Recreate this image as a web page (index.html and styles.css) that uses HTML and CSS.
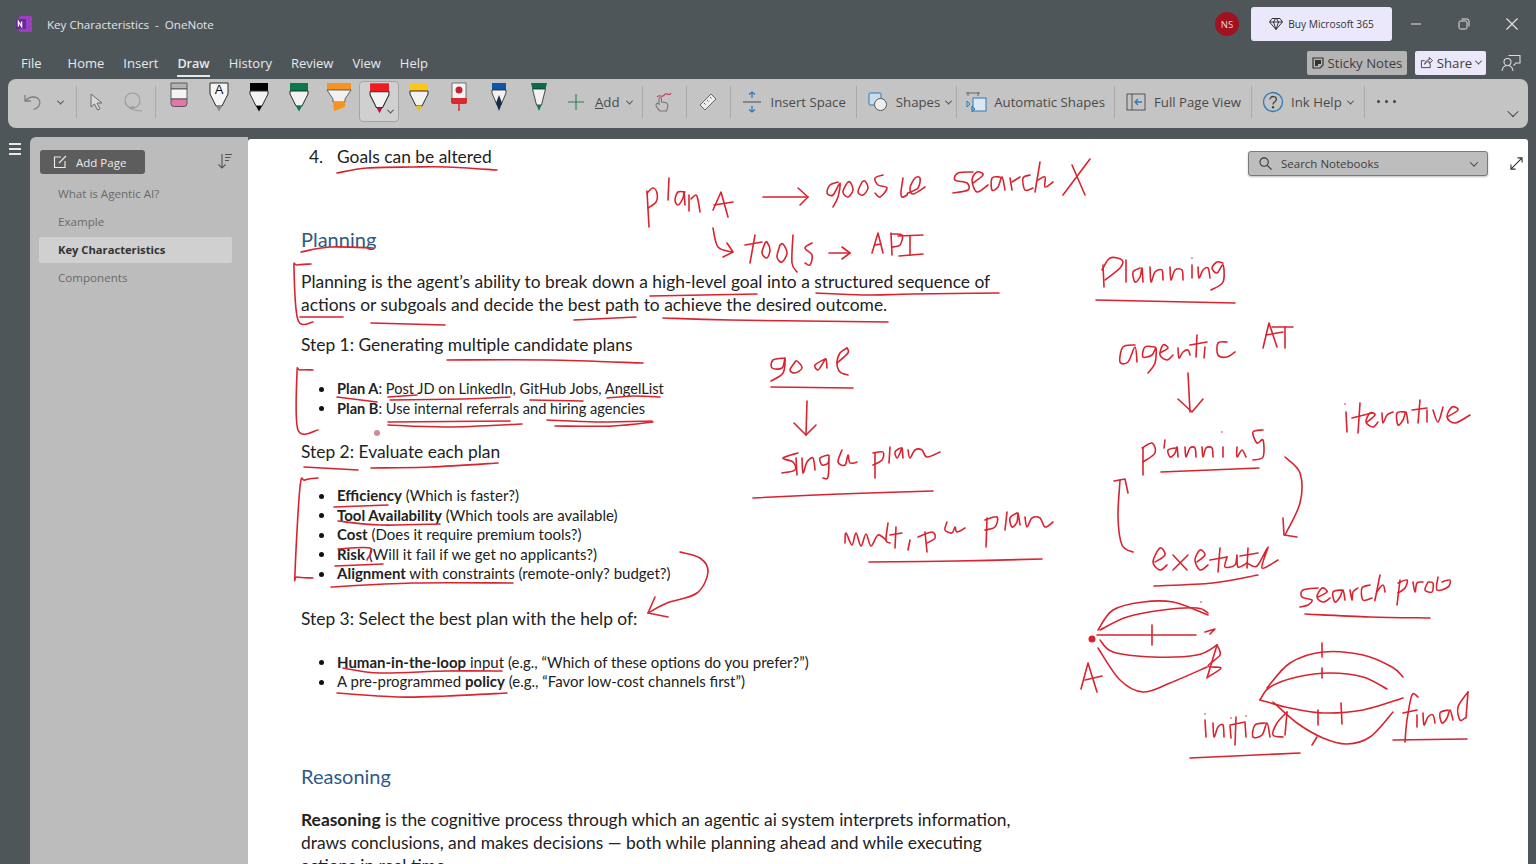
FILE: index.html
```html
<!DOCTYPE html>
<html lang="en">
<head>
    <meta charset="UTF-8">
    <meta name="viewport" content="width=device-width, initial-scale=1.0">
    <title>Key Characteristics - OneNote</title>
    <link rel="stylesheet" href="styles.css">
</head>
<body>

    <svg class="defs" width="0" height="0">
        <symbol id="pen" viewBox="0 0 20 30">
            <path class="pen-cap" d="M1 1h18v8H1z"/>
            <path d="M1 9h18v3l-6 12H7L1 12z" fill="#f2f2f2" stroke="#2a2a2a" stroke-width="1"/>
            <path class="pen-tip" d="M7 24h6l-3 5.500z"/>
        </symbol>
    </svg>

    <header class="titlebar">
        <svg class="app-icon" viewBox="0 0 16 16" width="16" height="16">
            <rect x="3" y="0" width="13" height="16" rx="1.500" fill="#9a3fc2"/>
            <rect x="0" y="3" width="10" height="10" rx="1" fill="#6a2a9a"/>
            <path d="M2.400 10.500v-5l3.200 5v-5" fill="none" stroke="#fff" stroke-width="1.300"/>
        </svg>
        <span class="doc-title">Key Characteristics &nbsp;-&nbsp; OneNote</span>
        <span class="avatar">NS</span>
        <button class="buy-btn">
            <svg viewBox="0 0 14 14" width="14" height="14" fill="none" stroke="#333" stroke-width="1">
                <path d="M3 1.500h8l2.500 3.500L7 12.500.5 5zM.5 5h13M4.500 5 7 12.500 9.500 5 7.500 1.500h-1z"/>
            </svg>
            Buy Microsoft 365
        </button>
        <div class="window-controls">
            <svg viewBox="0 0 12 12" width="12" height="12" stroke="#e4e4e4" fill="none"><path d="M1 6h10"/></svg>
            <svg viewBox="0 0 12 12" width="12" height="12" stroke="#e4e4e4" fill="none"><rect x="1" y="3" width="8" height="8" rx="1.500"/><path d="M3.500 1h5.500a2 2 0 0 1 2 2v5.500"/></svg>
            <svg viewBox="0 0 12 12" width="12" height="12" stroke="#e4e4e4" fill="none" stroke-width="1.200"><path d="m.5.5 11 11M11.500.5l-11 11"/></svg>
        </div>
    </header>

    <nav class="tabs">
        <a class="tab tab-file">File</a>
        <a class="tab">Home</a>
        <a class="tab">Insert</a>
        <a class="tab active">Draw</a>
        <a class="tab">History</a>
        <a class="tab">Review</a>
        <a class="tab">View</a>
        <a class="tab">Help</a>
        <button class="sticky-btn">
            <svg viewBox="0 0 12 12" width="12" height="12"><path d="M1 1h10v7l-3 3H1z" fill="none" stroke="#333" stroke-width="1.200"/><path d="M3 3h6v4H6v2H3z" fill="#333"/></svg>
            Sticky Notes
        </button>
        <button class="share-btn">
            <svg viewBox="0 0 14 14" width="13" height="13" fill="none" stroke="#444"><path d="M11 8v4.500H1.500V5H5M5 9c.5-3 2.500-5 5-5V1.500L13.500 5 10 8V6C8 6 6 7 5 9z"/></svg>
            Share
            <span class="chev"></span>
        </button>
        <svg class="comment-icon" viewBox="0 0 20 20" width="20" height="20" fill="none" stroke="#d8dadb" stroke-width="1.100">
            <circle cx="6.500" cy="9" r="3.500"/><path d="M1 18c.5-3.500 2.800-5.500 5.500-5.500S11.500 14.500 12 18M7.500 2.500H19V10h-4l-2.500 2.500"/>
        </svg>
    </nav>

    <section class="toolbar">
        <svg class="undo-icon" viewBox="0 0 20 20" width="20" height="20" fill="none" stroke="#7f7f7f" stroke-width="1.300"><path d="M2 3v6h6M2.500 9C6 4 14 3.500 16.500 8.500c1.500 4-1 7.500-6 9"/></svg>
        <span class="chev chev-undo"></span>
        <span class="sep sep-undo"></span>
        <svg class="cursor-icon" viewBox="0 0 18 20" width="18" height="20" fill="#d8d8d8" stroke="#6a6a6a"><path d="M4 2v13l3.500-3 3 6 2.500-1.200-3-5.800h5z"/></svg>
        <svg class="lasso-icon" viewBox="0 0 22 22" width="22" height="22" fill="none" stroke="#9a9a9a" stroke-width="1.100"><circle cx="10.500" cy="9.500" r="7.500"/><path d="M7 16c1 3 5 2 5 .5s-3-1-3 .5 6 3 11 3"/></svg>
        <span class="sep sep-lasso"></span>

        <div class="pens">
            <div class="pen-slot">
                <svg viewBox="0 0 20 26" width="20" height="26">
                    <path d="M2 1h16v6H2z" fill="#b3b3b3" stroke="#444" stroke-width=".8"/>
                    <path d="M2 7h16v10H2z" fill="#f4f4f4" stroke="#444" stroke-width=".8"/>
                    <path d="M2 17h16v4.500a3 3 0 0 1-3 3H5a3 3 0 0 1-3-3z" fill="#e277ac" stroke="#444" stroke-width=".8"/>
                </svg>
            </div>
            <div class="pen-slot">
                <svg viewBox="0 0 20 30" width="20" height="30">
                    <path d="M1 1h18v11l-6 12H7L1 12z" fill="#f5f5f5" stroke="#2a2a2a"/>
                    <path d="M7 24h6l-3 5.500z" fill="#888"/>
                    <text x="10" y="12" class="pen-letter">A</text>
                </svg>
            </div>
            <div class="pen-slot"><svg class="pen pen-black" width="20" height="30"><use href="#pen"/></svg></div>
            <div class="pen-slot"><svg class="pen pen-green" width="20" height="30"><use href="#pen"/></svg></div>
            <div class="pen-slot">
                <svg viewBox="0 0 26 30" width="26" height="30">
                    <path d="M1 1h24v7H1z" fill="#f7941d"/>
                    <path d="M1 8h24l-6 9v3H7v-3z" fill="#f2f2f2" stroke="#444" stroke-width=".8"/>
                    <path d="M7 20h12v5l-11 4z" fill="#f7941d"/>
                </svg>
            </div>
            <div class="pen-slot pen-selected">
                <svg class="pen pen-red" width="21" height="32"><use href="#pen"/></svg>
                <span class="chev chev-pen"></span>
            </div>
            <div class="pen-slot"><svg class="pen pen-yellow" width="20" height="30"><use href="#pen"/></svg></div>
            <div class="pen-slot">
                <svg viewBox="0 0 20 30" width="20" height="30">
                    <path d="M3 1h14v16H3z" fill="#f4f4f4" stroke="#555" stroke-width=".8"/>
                    <circle cx="10" cy="8" r="3.500" fill="#c3232e"/>
                    <path d="M2 16h16v4a2 2 0 0 1-2 2H4a2 2 0 0 1-2-2z" fill="#d92b2f"/>
                    <path d="M10 22v7" stroke="#d92b2f" stroke-width="1.500"/>
                </svg>
            </div>
            <div class="pen-slot">
                <svg viewBox="0 0 20 30" width="20" height="30">
                    <path d="M3 1h14v7H3z" fill="#0e56a6"/>
                    <path d="M3 8h14v3l-5 12H8L3 11z" fill="#f2f2f2" stroke="#222" stroke-width=".8"/>
                    <path d="M7 21c1-3 2-5 3-8 1 3 2 5 3 8l-3 8z" fill="#1b2a4a"/>
                </svg>
            </div>
            <div class="pen-slot">
                <svg viewBox="0 0 20 30" width="20" height="30">
                    <path d="M2 1h16l-1.500 6h-13z" fill="#0c6b49"/>
                    <path d="M3.500 7h13l-4 16h-5z" fill="#f2f2f2" stroke="#222" stroke-width=".8"/>
                    <path d="M7.500 23h5L10 29z" fill="#0c7a52"/>
                </svg>
            </div>
        </div>

        <button class="tool tool-add">
            <svg viewBox="0 0 16 16" width="16" height="16" stroke="#2f7d55" stroke-width="1.100"><path d="M8 0v16M0 8h16"/></svg>
            <span class="tool-label"><u>A</u>dd</span><span class="chev"></span>
        </button>
        <span class="sep"></span>
        <button class="tool tool-hand">
            <svg viewBox="0 0 20 22" width="20" height="22" fill="none" stroke="#777" stroke-width="1.100"><path d="M7 20c-2-2-4-4-4-6s2-2 3-1V8c0-2 2.500-2 2.500 0v3c2 0 5 .5 6 2s0 4-1 7z"/><path d="M4 6c2-3 4 0 6-1s2-3 4-2 3 1 4-1" stroke="#c2374e"/></svg>
        </button>
        <span class="sep"></span>
        <button class="tool tool-ruler">
            <svg viewBox="0 0 20 20" width="20" height="20" fill="#ececec" stroke="#666"><path d="m2 13 11-11 5 5L7 18zM6 11l1.500 1.500M9 8l1.500 1.500M12 5l1.500 1.500"/></svg>
        </button>
        <span class="sep"></span>
        <button class="tool">
            <svg viewBox="0 0 20 22" width="20" height="22" fill="none" stroke="#2f78b7" stroke-width="1.300"><path d="M10 1v6M7 3.500 10 1l3 2.500M10 21v-6M7 18.500l3 2.500 3-2.500"/><path d="M1 11h18" stroke="#666"/></svg>
            <span class="tool-label">Insert Space</span>
        </button>
        <span class="sep"></span>
        <button class="tool tool-shapes">
            <svg viewBox="0 0 20 20" width="20" height="20" stroke="#2f78b7" fill="#c9dcec"><rect x="1" y="1" width="12" height="12" rx="1"/><circle cx="12.500" cy="12.500" r="6" fill="#eee" stroke="#555"/></svg>
            <span class="tool-label">Shapes</span><span class="chev"></span>
        </button>
        <span class="sep"></span>
        <button class="tool tool-auto">
            <svg viewBox="0 0 22 22" width="22" height="22" fill="none" stroke="#666"><path d="M1 2h14M3 1v4M13 1v4"/><rect x="8" y="7" width="13" height="13" fill="#dbe7f1" stroke="#2f78b7"/><path d="m2 10 3 3-3 3zM7 15l3 3-3 3z" stroke="#2f78b7"/></svg>
            <span class="tool-label">Automatic Shapes</span>
        </button>
        <span class="sep"></span>
        <button class="tool">
            <svg viewBox="0 0 20 20" width="20" height="20" fill="none" stroke="#555"><rect x="1" y="2" width="18" height="16"/><path d="M6 2v16"/><path d="M16 10H9M12 7l-3 3 3 3" stroke="#2f78b7" stroke-width="1.300"/></svg>
            <span class="tool-label">Full Page View</span>
        </button>
        <span class="sep"></span>
        <button class="tool tool-help">
            <svg viewBox="0 0 22 22" width="22" height="22" fill="none" stroke="#2f78b7" stroke-width="1.300"><circle cx="11" cy="11" r="9.500"/><path d="M7.800 8.500c.5-4 7-4 6.500.2-.2 2-3.300 2.300-3.300 4.800" stroke="#444"/><circle cx="11" cy="16.300" r=".6" stroke="#444"/></svg>
            <span class="tool-label">Ink Help</span><span class="chev"></span>
        </button>
        <span class="sep"></span>
        <span class="more">
            <i></i><i></i><i></i>
        </span>
        <span class="chev chev-collapse"></span>
    </section>

    <main class="workspace">
        <div class="rail">
            <span class="hamburger"><i></i><i></i><i></i></span>
        </div>

        <aside class="sidebar">
            <div class="sidebar-top">
                <button class="add-page">
                    <svg viewBox="0 0 14 14" width="14" height="14" fill="none" stroke="#eee" stroke-width="1.100"><path d="M8 2H1.500v10.500H12V6M6 8l7-7"/></svg>
                    Add Page
                </button>
                <svg class="sort-icon" viewBox="0 0 16 16" width="16" height="16" fill="none" stroke="#555" stroke-width="1.100"><path d="M5 1v14M1.500 11.500 5 15l3.500-3.500M8 1.500h7M8 4.500h5.500M8 7.500h4"/></svg>
            </div>
            <ul class="page-list">
                <li>What is Agentic AI?</li>
                <li>Example</li>
                <li class="current">Key Characteristics</li>
                <li>Components</li>
            </ul>
        </aside>

        <article class="page">
            <div class="search-row">
                <div class="search-box">
                    <svg viewBox="0 0 14 14" width="13" height="13" fill="none" stroke="#333" stroke-width="1.200"><circle cx="5.500" cy="5.500" r="4.500"/><path d="m9 9 4.500 4.500"/></svg>
                    <span>Search Notebooks</span>
                    <span class="chev chev-search"></span>
                </div>
                <svg viewBox="0 0 14 14" width="13" height="13" fill="none" stroke="#333" stroke-width="1.200"><path d="M1 13 13 1M8 1h5v5M1 8v5h5"/></svg>
            </div>

            <div class="note">
                <p class="goal-line"><span class="num">4.</span>Goals can be altered</p>

                <h2 class="heading heading-planning">Planning</h2>
                <p class="para para-first">Planning is the agent’s ability to break down a high-level goal into a structured sequence of<br>actions or subgoals and decide the best path to achieve the desired outcome.</p>

                <p class="para step-1">Step 1: Generating multiple candidate plans</p>
                <ul class="points points-plans">
                    <li><b>Plan A</b>: Post JD on LinkedIn, GitHub Jobs, AngelList</li>
                    <li><b>Plan B</b>: Use internal referrals and hiring agencies</li>
                </ul>

                <p class="para step-2">Step 2: Evaluate each plan</p>
                <ul class="points">
                    <li><b>Efficiency</b> (Which is faster?)</li>
                    <li><b>Tool Availability</b> (Which tools are available)</li>
                    <li><b>Cost</b> (Does it require premium tools?)</li>
                    <li><b>Risk</b> (Will it fail if we get no applicants?)</li>
                    <li><b>Alignment</b> with constraints (remote-only? budget?)</li>
                </ul>

                <p class="para step-3">Step 3: Select the best plan with the help of:</p>
                <ul class="points points-last">
                    <li><b>Human-in-the-loop</b> input (e.g., “Which of these options do you prefer?”)</li>
                    <li>A pre-programmed <b>policy</b> (e.g., “Favor low-cost channels first”)</li>
                </ul>

                <h2 class="heading heading-reasoning">Reasoning</h2>
                <p class="para para-reasoning"><b>Reasoning</b> is the cognitive process through which an agentic ai system interprets information,<br>draws conclusions, and makes decisions — both while planning ahead and while executing<br>actions in real time.</p>
            </div>

            <!-- pen ink lies over the page, coordinates are window pixels -->
            <svg id="ink" class="ink" viewBox="248 139 1280 725" width="1280" height="725"></svg>
        </article>
    </main>

    <script src="ink.js"></script>
</body>
</html>
```

FILE: styles.css
```css
* {
    box-sizing: border-box;
}

html, body {
    margin: 0;
    height: 100%;
    overflow: hidden;
}

body {
    background-color: #4e565a;
    font-family: "Open Sans", "Noto Sans", sans-serif;
    color: #222;
    display: flex;
    flex-direction: column;
}

button {
    font-family: inherit;
    border: none;
    background: none;
    padding: 0;
}

.defs {
    position: absolute;
}

.chev {
    display: inline-block;
    width: 5px;
    height: 5px;
    border-right: 1.3px solid #444;
    border-bottom: 1.3px solid #444;
    transform: rotate(45deg) translate(-1px, -1px);
    flex: none;
}

/* title bar */
.titlebar {
    height: 46px;
    display: flex;
    align-items: center;
    padding: 2px 0 0 16px;
    flex: none;
}

.doc-title {
    margin-left: 15px;
    font-size: 11.6px;
    color: #e2e4e5;
    flex: 1;
}

.avatar {
    width: 24px;
    height: 24px;
    border-radius: 50%;
    background-color: #a0121f;
    color: #f0d6d8;
    font-size: 9.5px;
    display: flex;
    align-items: center;
    justify-content: center;
    margin-right: 12px;
}

.buy-btn {
    width: 141px;
    height: 34px;
    background-color: #ece8fb;
    border-radius: 3px;
    font-size: 10.2px;
    color: #333;
    display: flex;
    align-items: center;
    justify-content: center;
    gap: 5px;
}

.window-controls {
    width: 144px;
    display: flex;
    justify-content: space-between;
    padding: 0 18px;
}

/* ribbon tabs */
.tabs {
    height: 33px;
    display: flex;
    align-items: center;
    padding: 0 15px 0 21px;
    flex: none;
}

.tab {
    font-size: 13px;
    color: #e8e9ea;
    margin-right: 19px;
    padding: 6px 0 3px;
    border-bottom: 2px solid transparent;
}

.tab-file {
    margin-right: 26px;
}

.tab.active {
    font-size: 12.6px;
    font-weight: 600;
    border-bottom-color: #e8e9ea;
}

.sticky-btn, .share-btn {
    height: 24px;
    border-radius: 2px;
    display: flex;
    align-items: center;
    justify-content: center;
    font-size: 13.2px;
    color: #3d3d3d;
    gap: 4px;
}

.sticky-btn {
    margin-left: auto;
    width: 100px;
    background-color: #b4b4b4;
}

.share-btn {
    margin-left: 8px;
    width: 71px;
    background-color: #ece8fb;
}

.comment-icon {
    margin-left: 15px;
}

/* draw toolbar */
.toolbar {
    margin: 0 8px;
    height: 49px;
    background-color: #c4c4c4;
    border-radius: 8px;
    display: flex;
    align-items: center;
    padding: 0 0 3px 15px;
    position: relative;
    flex: none;
}

.sep {
    width: 1px;
    height: 32px;
    background-color: #a9a9a9;
    flex: none;
}

.chev-undo {
    margin: 0 0 0 15px;
}

.sep-undo {
    margin-left: 13px;
}

.cursor-icon {
    margin-left: 10px;
}

.lasso-icon {
    margin-left: 17px;
}

.sep-lasso {
    margin-left: 11px;
}

.pens {
    display: flex;
    margin-left: 3px;
    align-items: flex-start;
    align-self: flex-start;
    padding-top: 3px;
}

.pen-slot {
    width: 40px;
    height: 38px;
    display: flex;
    justify-content: center;
    position: relative;
}

.pen-black { --cap: #000; --tip: #000; }
.pen-green { --cap: #0b7a4a; --tip: #0b7a4a; }
.pen-red { --cap: #f01c24; --tip: #b5173f; }
.pen-yellow { --cap: #fdc515; --tip: #e6c020; }

.pen-cap {
    fill: var(--cap);
}

.pen-tip {
    fill: var(--tip);
}

.pen-letter {
    font-family: "Liberation Sans", sans-serif;
    font-size: 13px;
    text-anchor: middle;
    fill: #111;
}

.pen-selected {
    height: 41px;
    margin-top: -1px;
    background-color: #d0d0d0;
    border: 1px solid #a4a4a4;
    border-radius: 4px;
}

.chev-pen {
    position: absolute;
    right: 5px;
    bottom: 7px;
}

.tool {
    display: flex;
    align-items: center;
    gap: 8px;
    padding: 0 10px 0 11px;
    height: 100%;
    flex: none;
}

.tool-add {
    padding: 0 10px 0 9px;
    gap: 11px;
}

.tool-hand {
    padding: 0 13px 0 10px;
}

.tool-ruler {
    padding: 0 12px 0 11px;
}

.tool-shapes {
    padding-right: 5px;
}

.tool-auto {
    padding: 0 9px 0 8px;
    gap: 7px;
}

.tool-help {
    padding: 0 11px 0 10px;
    gap: 7px;
}

.tool-label {
    font-size: 13.2px;
    color: #4a4a4a;
}

.tool .chev {
    margin-left: -4px;
}

.tool-add .chev {
    margin-left: -3px;
}

.tool-shapes .chev {
    margin-left: -2px;
}

.tool-help .chev {
    margin-left: -1px;
}

.more {
    display: flex;
    gap: 5px;
    margin: -2px 0 0 12px;
}

.more i {
    width: 3px;
    height: 3px;
    border-radius: 50%;
    background-color: #444;
}

.chev-collapse {
    position: absolute;
    right: 11px;
    bottom: 11px;
    width: 8px;
    height: 8px;
}

/* lower part */
.workspace {
    flex: 1;
    display: flex;
    min-height: 0;
    margin-top: 9px;
}

.rail {
    width: 30px;
    flex: none;
}

.hamburger {
    display: flex;
    flex-direction: column;
    gap: 3px;
    margin: 6px 0 0 9px;
    width: 12px;
}

.hamburger i {
    height: 2px;
    background-color: #e8e8e8;
}

.sidebar {
    width: 218px;
    background-color: #bcbcbc;
    border-radius: 6px 0 0 0;
    flex: none;
    padding: 13px 16px 0 10px;
}

.sidebar-top {
    display: flex;
    align-items: center;
    justify-content: space-between;
}

.add-page {
    width: 105px;
    height: 24px;
    background-color: #5d5d5d;
    border-radius: 3px;
    color: #ececec;
    font-size: 11.5px;
    display: flex;
    align-items: center;
    gap: 9px;
    padding-left: 13px;
}

.sort-icon {
    margin-top: -3px;
    margin-right: -1px;
}

.page-list {
    list-style: none;
    margin: 6px 0 0 -1px;
    padding: 0;
    font-size: 11.6px;
    color: #6a6a6a;
}

.page-list li {
    height: 28px;
    line-height: 28px;
    padding-left: 19px;
}

.page-list .current {
    font-size: 11.2px;
    font-weight: 700;
    color: #333;
    background-color: #d0d0d0;
    height: 26px;
    line-height: 26px;
    margin: 1px 0;
    border-radius: 2px;
}

/* note page */
.page {
    margin: 2px 8px 0 0;
    flex: 1;
    background-color: #fff;
    position: relative;
    overflow: hidden;
    border-radius: 3px 3px 0 0;
}

.search-row {
    position: absolute;
    right: 5px;
    top: 12px;
    display: flex;
    align-items: center;
    gap: 22px;
    z-index: 2;
}

.search-box {
    width: 240px;
    height: 25px;
    background-color: #bdbdbd;
    border: 1px solid #7a7a7a;
    border-radius: 3px;
    box-shadow: 0 1px 2px rgba(0,0,0,0.25);
    font-size: 11.5px;
    color: #3d3d3d;
    display: flex;
    align-items: center;
    gap: 9px;
    padding: 0 10px;
}

.chev-search {
    margin-left: auto;
    width: 6px;
    height: 6px;
}

.note {
    padding: 6px 0 0 53px;
    font-family: "Lato", "Noto Sans", sans-serif;
    color: #222;
}

.note p, .note h2, .note ul {
    margin: 0;
}

.goal-line {
    font-size: 17.4px;
    line-height: 23px;
}

.num {
    display: inline-block;
    margin-left: 8px;
    width: 28px;
}

.heading {
    font-weight: 400;
    font-size: 20px;
    line-height: 28px;
    color: #2f5a85;
}

.note .heading-planning {
    margin-top: 57px;
}

.note .heading-reasoning {
    margin-top: 70px;
}

.para {
    font-size: 17.4px;
    line-height: 23px;
}

.note .para-first {
    margin-top: 17px;
}

.note .step-1 {
    margin-top: 17px;
}

.note .step-2 {
    margin-top: 22px;
}

.note .step-3 {
    margin-top: 23.5px;
}

.note .para-reasoning {
    margin-top: 18px;
}

.note .points {
    margin-top: 23px;
    padding-left: 36px;
    font-size: 15px;
    line-height: 19.5px;
    list-style: none;
}

.note .points-plans {
    font-size: 14.6px;
}

.note .points-last {
    margin-top: 22.5px;
}

.points li::before {
    content: "";
    display: inline-block;
    width: 5px;
    height: 5px;
    border-radius: 50%;
    background-color: #111;
    margin: 0 13px 2px -18px;
    vertical-align: middle;
}

.ink {
    position: absolute;
    left: 0;
    top: 0;
    pointer-events: none;
}

.ink path {
    fill: none;
    stroke: #d9232f;
    stroke-width: 1.6;
    stroke-linecap: round;
    stroke-linejoin: round;
}
```

FILE: ink.js
```js
// pen strokes drawn on the page, in window pixels
// curves get smoothed, lines stay straight (arrow heads, crossings)
const curves = [
    // plan A
    [647,193,653,188,657,193,656,202,648,208],
    [669,178,668,200],
    [685,192,678,192,675,200,678,205,683,198,684,192,685,205],
    [689,195,689,211],
    [691,199,696,195,698,200,700,212],
    [713,228,718,247,732,252],
    // google
    [838,182,830,185,827,193,833,195,840,183,838,197,833,207],
    [847,183,843,192,848,197,853,190,850,182,847,183],
    [862,182,858,192,863,195,868,188,865,181,862,182],
    [883,175,875,178,878,185,887,188,880,197,875,193],
    [903,178,901,192,902,197,907,195,908,193,918,188,920,178,915,178,910,188,913,194,925,187],
    // search
    [973,172,958,173,955,180,967,183,968,190,953,193],
    [973,183,983,175,977,172,972,180,977,192,988,185],
    [1000,177,992,178,992,190,998,187,1002,177,1005,190],
    [1012,182,1020,177],
    [1030,175,1023,178,1025,190,1033,188],
    [1038,180,1045,177,1045,187,1053,182],
    // tools -> API
    [765,243,762,253,767,258,770,250,767,242,765,243],
    [780,245,777,257,782,262,787,253,783,244,780,245],
    [793,235,792,263,797,272],
    [812,243,805,248,812,255,810,265,805,263],
    [891,234,902,235,900,245,892,247],
    // underlines on the text
    [337,173,367,168,413,167,447,167,497,170],
    [301,252,330,247,373,248],
    [311,264,297,265,294,268,298,320,313,322],
    [300,317,343,317],
    [371,323,445,325],
    [574,320,636,317],
    [663,318,730,320,888,322],
    [650,296,757,294],
    [816,293,863,295,913,294,999,293],
    [447,360,547,360,643,363],
    [313,370,300,370,297,373,298,430,318,430],
    [337,397,377,402],
    [388,397,417,395],
    [390,400,463,399,510,397],
    [530,400,583,401],
    [607,398,633,396,660,397],
    [388,422,510,421],
    [388,425,447,427,522,424],
    [547,420,597,422,652,421],
    [555,426,613,426,653,422],
    [304,467,358,470],
    [371,468,430,467,498,463],
    [318,478,305,480,300,487,295,573,297,577,313,578],
    [334,507,388,505],
    [338,521,380,525,440,524],
    [338,549,370,548,367,560],
    [335,566,383,564],
    [331,587,413,583,513,583],
    [680,552,700,558,708,572,697,593,667,603,648,613],
    [343,668,380,673,447,671,502,671],
    [337,693,397,697,447,696,507,693],
    // goal
    [785,358,773,360,772,368,782,368,785,358,783,373,771,381],
    [795,362,790,370,795,373,802,368,797,361,795,362],
    [825,359,815,365,818,370,823,363,826,359,827,368],
    [847,348,840,353,837,363,840,372,848,375],
    [847,348,848,353,837,363],
    [771,387,853,388],
    // single plan
    [798,453,783,458,793,462,795,470,782,473],
    [796,458,797,475],
    [802,458,803,473,807,462,813,458,815,470],
    [828,455,820,458,822,465,828,463,829,456,828,477,823,478],
    [842,450,838,462,845,465,848,455,850,463,857,462],
    [873,453,883,452,882,460,873,465],
    [890,447,889,463],
    [900,448,895,452,897,458,900,453,902,448,903,458],
    [908,450,910,458,915,450,922,450,927,457,940,452],
    [753,498,840,494,933,491],
    // multiple plan
    [845,543,846,533,852,545,856,533,861,546,866,534,871,546,878,535,886,540],
    [888,523,886,540,890,543],
    [896,527,895,548],
    [910,540,908,550],
    [918,537,932,532,935,538,927,543],
    [947,522,945,530,952,533,955,527,957,532,965,528],
    [985,520,997,517,995,527,985,530],
    [1007,512,1005,530],
    [1017,513,1010,518,1012,527,1017,522,1018,513,1020,525],
    [1025,517,1027,527,1032,518,1040,518,1045,527,1053,522],
    [869,562,957,561,1042,559],
    // Planning
    [1102,270,1110,258,1122,260,1120,268,1105,280],
    [1126,260,1126,282],
    [1140,268,1133,272,1135,282,1140,277,1142,268,1143,282],
    [1150,267,1151,282,1155,272,1162,270,1163,280],
    [1170,267,1171,280,1175,270,1182,270,1183,280],
    [1192,265,1192,278],
    [1198,267,1199,278,1203,270,1208,268,1210,278],
    [1223,263,1217,262,1212,268,1217,273,1223,265,1223,282,1211,290],
    [1096,300,1235,303],
    // agentic AI
    [1135,345,1123,347,1120,362,1128,362,1135,347,1137,362],
    [1155,347,1145,347,1143,357,1152,355,1156,348,1155,363,1148,373],
    [1160,353,1168,348,1163,345,1160,355,1167,360,1173,355],
    [1178,348,1179,358,1183,352,1188,350,1190,355],
    [1197,335,1196,357],
    [1205,347,1204,358],
    [1227,342,1218,343,1218,355,1227,357,1235,352],
    // iterative
    [1346,412,1347,432],
    [1360,403,1358,433],
    [1367,422,1375,415,1370,413,1366,422,1373,427,1378,422],
    [1382,413,1383,423,1387,415,1393,412],
    [1405,412,1397,413,1398,425,1403,420,1406,412,1408,423],
    [1420,400,1418,423],
    [1427,410,1427,422],
    [1433,410,1438,422,1443,407],
    [1447,417,1458,410,1452,407,1447,417,1455,423,1470,415],
    // planning / execute loop
    [1142,448,1152,443,1155,453,1143,462],
    [1143,448,1143,475],
    [1165,440,1164,448],
    [1175,448,1168,450,1170,457,1175,453,1177,447,1178,457],
    [1185,447,1186,457,1190,448,1195,448,1196,457],
    [1202,447,1203,457,1206,448,1212,448,1213,457],
    [1223,447,1223,457],
    [1237,447,1237,457,1242,450,1246,457],
    [1263,430,1253,432,1257,443,1263,440,1263,457,1253,460],
    [1161,472,1259,468],
    [1285,457,1300,473,1300,503,1285,535],
    [1133,552,1122,545,1118,517,1120,480],
    [1155,562,1165,555,1160,548,1153,562,1160,570,1167,565],
    [1197,562,1205,555,1200,550,1195,560,1200,570,1208,565],
    [1220,548,1218,572],
    [1227,557,1225,567,1235,565,1237,555,1238,567,1247,563],
    [1248,548,1247,568],
    [1247,563,1257,566,1268,547,1262,568,1278,560],
    [1154,586,1213,583,1258,575],
    // search prob
    [1318,588,1303,590,1302,597,1312,600,1308,605,1300,607],
    [1318,597,1327,592,1322,588,1317,597,1323,602,1330,598],
    [1342,590,1333,592,1335,602,1340,597,1343,590,1345,600],
    [1350,590,1352,600,1353,592,1358,588],
    [1370,585,1362,588,1363,600,1372,598],
    [1380,575,1375,600,1377,592,1383,585,1385,592],
    [1400,580,1397,605],
    [1398,583,1407,580,1405,588,1398,593],
    [1413,582,1415,592,1417,583,1423,582],
    [1428,582,1425,590,1432,592,1433,583,1428,582],
    [1438,577,1437,590,1448,587,1450,580,1442,582],
    [1305,614,1370,617,1430,618],
    // A to B graph
    [1098,630,1113,610,1143,602,1173,602,1203,613,1208,615],
    [1100,630,1127,617,1163,610,1197,608,1208,613],
    [1100,640,1113,652,1153,657,1197,655,1217,645],
    [1098,648,1120,680,1143,692,1170,683,1207,667],
    [1217,645,1220,655,1208,666,1221,668,1208,677],
    // initial to final graph
    [1267,688,1290,663,1323,652,1363,655,1392,667,1403,677],
    [1260,700,1270,687,1297,677,1330,673,1363,677,1387,689],
    [1260,700,1290,708,1323,713,1363,710,1403,698],
    [1273,702,1297,723,1323,738,1347,744,1370,737,1393,712],
    // initial
    [1205,720,1206,737],
    [1213,723,1214,737,1218,727,1223,725,1224,737],
    [1230,726,1231,738],
    [1245,723,1246,737],
    [1265,723,1255,725,1253,737,1262,735,1267,723,1270,737],
    [1287,712,1277,723,1273,735,1283,737],
    [1287,712,1285,735],
    [1190,758,1300,753],
    // final
    [1418,697,1412,695,1407,720,1405,742],
    [1417,715,1417,727],
    [1423,713,1424,725,1428,717,1433,715,1435,723],
    [1448,710,1440,713,1442,723,1447,718,1450,710,1453,720],
    [1468,692,1458,707,1460,720,1465,718],
    [1468,692,1466,718],
    [1393,740,1467,739]
];

const lines = [
    [647,191,649,227],
    [713,210,721,192,728,217],
    [714,205,733,202],
    [763,197,808,197],
    [798,188,808,197,800,205],
    [1010,178,1012,190],
    [1040,162,1035,192],
    [1090,159,1063,195],
    [1072,165,1085,195],
    [727,243,733,252,723,257],
    [755,235,750,263],
    [745,245,762,242],
    [829,253,850,253],
    [842,247,850,253,842,259],
    [872,253,878,233,883,253],
    [875,245,881,244],
    [891,233,892,255],
    [898,236,923,235],
    [910,236,910,255],
    [899,256,923,254],
    [655,597,648,613,668,617],
    [807,401,806,435],
    [794,423,806,435,816,425],
    [875,453,875,478],
    [890,535,902,533],
    [925,532,927,552],
    [987,518,986,547],
    [1103,265,1104,287],
    [1190,345,1207,342],
    [1263,348,1269,323,1277,347],
    [1266,335,1283,332],
    [1272,327,1293,327],
    [1285,327,1285,348],
    [1188,373,1190,412],
    [1178,399,1192,412,1203,399],
    [1412,410,1427,408],
    [1352,418,1372,413],
    [1283,518,1284,535,1297,537],
    [1114,481,1125,479,1128,493],
    [1173,555,1187,570],
    [1188,555,1173,570],
    [1210,560,1227,557],
    [1240,556,1258,553],
    [1097,635,1196,635],
    [1152,625,1152,645],
    [1205,632,1215,629,1210,634],
    [1081,689,1088,663,1097,692],
    [1085,680,1102,676],
    [1207,678,1217,645],
    [1322,643,1322,657],
    [1322,668,1322,678],
    [1318,710,1318,725],
    [1341,703,1342,724],
    [1317,737,1312,745],
    [1236,717,1235,745],
    [1230,725,1245,722],
    [1403,713,1417,710]
];

const dots = [
    [377,433,3,"#d08b96"],
    [1092,639,3.5,"#d9232f"],
    [1201,602,0.8,"#d9232f"],
    [1345,404,0.8,"#d9232f"],
    [1222,432,0.8,"#d9232f"],
    [1192,258,0.8,"#d9232f"],
    [1205,714,0.8,"#d9232f"],
    [1231,718,0.8,"#d9232f"],
    [1246,716,0.8,"#d9232f"]
];

function smoothPath(p) {
    let d = `M${p[0]} ${p[1]}`;
    const n = p.length / 2;
    const pt = i => {
        const k = Math.max(0, Math.min(n - 1, i)) * 2;
        return [p[k], p[k + 1]];
    };
    for (let i = 0; i < n - 1; i++) {
        const [x0, y0] = pt(i - 1);
        const [x1, y1] = pt(i);
        const [x2, y2] = pt(i + 1);
        const [x3, y3] = pt(i + 2);
        const c1x = x1 + (x2 - x0) / 6, c1y = y1 + (y2 - y0) / 6;
        const c2x = x2 - (x3 - x1) / 6, c2y = y2 - (y3 - y1) / 6;
        d += `C${c1x.toFixed(1)} ${c1y.toFixed(1)} ${c2x.toFixed(1)} ${c2y.toFixed(1)} ${x2} ${y2}`;
    }
    return d;
}

function straightPath(p) {
    let d = `M${p[0]} ${p[1]}`;
    for (let i = 2; i < p.length; i += 2) {
        d += `L${p[i]} ${p[i + 1]}`;
    }
    return d;
}

const ink = document.getElementById("ink");
const NS = "http://www.w3.org/2000/svg";

function addStroke(d) {
    const path = document.createElementNS(NS, "path");
    path.setAttribute("d", d);
    ink.appendChild(path);
}

curves.forEach(p => addStroke(smoothPath(p)));
lines.forEach(p => addStroke(straightPath(p)));

dots.forEach(([x, y, r, color]) => {
    const c = document.createElementNS(NS, "circle");
    c.setAttribute("cx", x);
    c.setAttribute("cy", y);
    c.setAttribute("r", r);
    c.setAttribute("fill", color);
    ink.appendChild(c);
});
```
